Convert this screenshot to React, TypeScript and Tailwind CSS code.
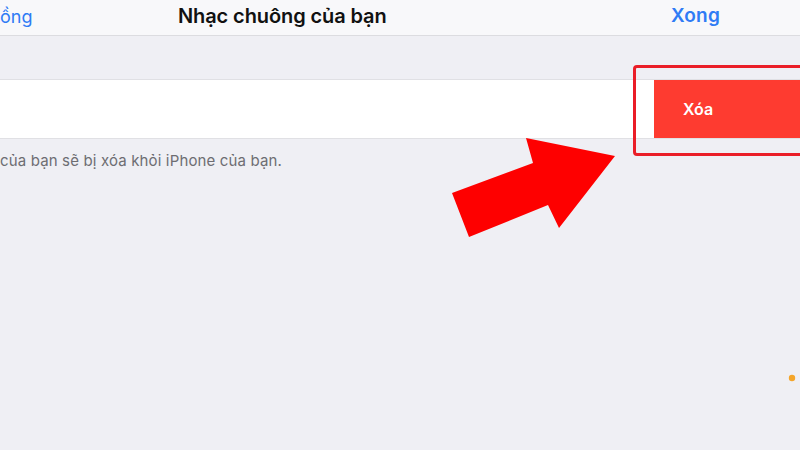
import React from 'react';

// Ringtone list in edit mode, swiped row showing the delete action
export default function App() {
  const font = { fontFamily: 'Inter, "Noto Sans", "Liberation Sans", sans-serif' };

  return (
    <div className="relative w-[800px] h-[450px] overflow-hidden bg-[#efeff4]" style={font}>
      {/* nav bar */}
      <div className="h-[36px] pb-[3px] bg-[#f8f8fa] border-b border-[#dcdce0] flex items-center">
        <span className="w-[178px] text-[18px] text-[#2f7bf5]">ồng</span>
        <span className="text-[20px] font-semibold text-[#111] tracking-[-0.1px]">Nhạc chuông của bạn</span>
        <span className="ml-auto mr-[80px] text-[19px] font-semibold text-[#2f7bf5] tracking-[0.2px]">Xong</span>
      </div>

      {/* swiped row */}
      <div className="mt-[43px] h-[60px] flex bg-white border-y border-[#e0e0e4]">
        <div className="flex-1" />
        <div className="w-[146px] bg-[#fe3b30] flex items-center pl-[29px]">
          <span className="text-[16px] font-semibold text-white">Xóa</span>
        </div>
      </div>

      <p className="mt-[13px] text-[15px] text-[#6d6d72] leading-[18px] tracking-[0.15px]">của bạn sẽ bị xóa khỏi iPhone của bạn.</p>

      {/* highlight box around the action */}
      <div className="absolute left-[633px] top-[65px] w-[180px] h-[91px] border-[3px] border-[#ea1d27] rounded-[4px]" />

      {/* pointer arrow */}
      <svg className="absolute left-0 top-0" width="800" height="450">
        <polygon points="452,193 533,163 526,138 615,156 559,228 548,205 469,237" fill="#fe0000" />
        <circle cx="792" cy="378" r="3.2" fill="#f4a52a" />
      </svg>
    </div>
  );
}
